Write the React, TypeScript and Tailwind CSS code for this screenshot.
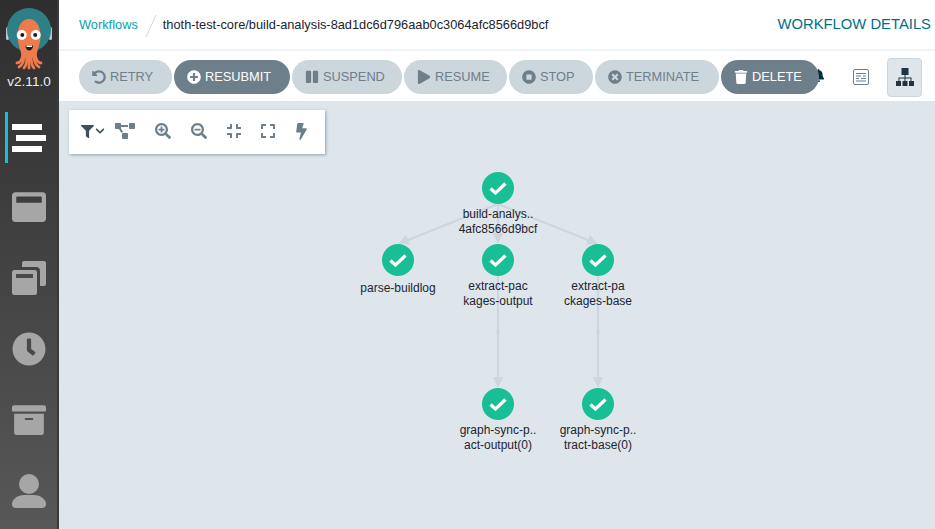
import {
  FaArchive,
  FaBell,
  FaBolt,
  FaChevronDown,
  FaClock,
  FaCompress,
  FaExpand,
  FaFilter,
  FaPause,
  FaPlay,
  FaPlusCircle,
  FaProjectDiagram,
  FaSearchMinus,
  FaSearchPlus,
  FaStopCircle,
  FaTimesCircle,
  FaTrash,
  FaUndoAlt,
  FaWindowMaximize,
} from "react-icons/fa";
import type { IconType } from "react-icons";

const actions: { label: string; icon: IconType; width: string; dark?: boolean }[] = [
  { label: "RETRY", icon: FaUndoAlt, width: "w-[93px]" },
  { label: "RESUBMIT", icon: FaPlusCircle, width: "w-[116px]", dark: true },
  { label: "SUSPEND", icon: FaPause, width: "w-[110px]" },
  { label: "RESUME", icon: FaPlay, width: "w-[103px]" },
  { label: "STOP", icon: FaStopCircle, width: "w-[84px]" },
  { label: "TERMINATE", icon: FaTimesCircle, width: "w-[124px]" },
  { label: "DELETE", icon: FaTrash, width: "w-[98px]", dark: true },
];

// graph coordinates, relative to the canvas
const nodes = [
  { x: 439, y: 87, lines: ["build-analys..", "4afc8566d9bcf"] },
  { x: 339, y: 159, lines: ["parse-buildlog"] },
  { x: 439, y: 159, lines: ["extract-pac", "kages-output"] },
  { x: 539, y: 159, lines: ["extract-pa", "ckages-base"] },
  { x: 439, y: 303, lines: ["graph-sync-p..", "act-output(0)"] },
  { x: 539, y: 303, lines: ["graph-sync-p..", "tract-base(0)"] },
];

function Logo() {
  return (
    <svg width="48" height="64" viewBox="6 6 48 64" className="ml-[1px]">
      <rect x="7" y="27" width="3" height="13" rx="1.5" fill="#b9c7d0" />
      <rect x="50" y="27" width="3" height="13" rx="1.5" fill="#b9c7d0" />
      <circle cx="30" cy="30" r="22" fill="#2f7f86" />
      <path d="M18.5 36 C18.5 26 23 19 30 19 C37 19 41.5 26 41.5 36 C41.5 44 38 50 37 58 H23 C22 50 18.5 44 18.5 36Z" fill="#ef7b4d" />
      <g stroke="#ef7b4d" strokeWidth="2.8" fill="none" strokeLinecap="round">
        <path d="M24 54 C23 60 21 63 18 63" />
        <path d="M25 55 C25 61 24 65 20 67" />
        <path d="M28 55 C28 62 27 66 25 68" />
        <path d="M30 55 V68" />
        <path d="M32 55 C32 62 33 66 35 68" />
        <path d="M35 55 C35 61 36 65 40 67" />
        <path d="M36 54 C37 60 39 63 42 63" />
      </g>
      <circle cx="22.7" cy="35" r="5" fill="#fff" />
      <circle cx="36.7" cy="35" r="5" fill="#fff" />
      <circle cx="23.3" cy="35" r="2" fill="#1d1d1d" />
      <circle cx="36.2" cy="35" r="2" fill="#1d1d1d" />
      <path d="M26.5 45.5 H34 C34 49 32 50.5 30.2 50.5 C28.4 50.5 26.5 49 26.5 45.5Z" fill="#1d1d1d" />
      <path d="M27.5 45.5 H33 V47 H27.5Z" fill="#fff" />
    </svg>
  );
}

function StackedWindows() {
  return (
    <svg width="34" height="34" viewBox="0 0 34 34">
      <path d="M10 2 Q10 0 12 0 H32 Q34 0 34 2 V23 Q34 25 32 25 H28 V10 Q28 6 24 6 H10Z" fill="#a6a6a6" />
      <rect x="0" y="9" width="25" height="25" rx="2.5" fill="#a6a6a6" />
      <rect x="4" y="13" width="17" height="4" fill="#4a4a4a" />
    </svg>
  );
}

function UserIcon() {
  return (
    <svg width="34" height="34" viewBox="0 0 34 34" fill="#a6a6a6">
      <circle cx="17" cy="10" r="10" />
      <path d="M0 30 C0 25 6 21 12 21 H22 C28 21 34 25 34 30 Q34 34 30 34 H4 Q0 34 0 30Z" />
    </svg>
  );
}

function BarsIcon() {
  return (
    <div className="flex flex-col gap-[5px]">
      <div className="w-[30px] h-[6px] bg-white" />
      <div className="w-[30px] h-[6px] bg-white ml-1" />
      <div className="w-[30px] h-[6px] bg-white" />
    </div>
  );
}

function Sidebar() {
  return (
    <div className="w-[59px] h-full shrink-0 flex flex-col items-center bg-gradient-to-b from-[#2e2e2e] to-[#585858] border-r-2 border-[#3a3a3a] text-[#a6a6a6]">
      <div className="h-[112px] flex flex-col items-center pt-[6px] w-full">
        <Logo />
        <div className="mt-[4px] ml-[1px] text-[13.6px] leading-4 text-[#e8edf0]">v2.11.0</div>
      </div>
      <div className="relative w-full h-[51px] flex items-center pl-3">
        <div className="absolute left-[5px] top-0 w-[3px] h-[51px] bg-[#18bed4]" />
        <BarsIcon />
      </div>
      <div className="mt-[27px] ml-[1px] flex flex-col items-center gap-[37px]">
        <FaWindowMaximize size={34} />
        <StackedWindows />
        <FaClock size={34} />
        <FaArchive size={34} />
        <UserIcon />
      </div>
    </div>
  );
}

function LogIcon() {
  return (
    <svg width="16" height="16" viewBox="0 0 16 16" fill="none" stroke="#6d7f8b">
      <rect x="0.5" y="0.5" width="15" height="15" rx="1.5" />
      <path d="M3 4.5H13M3 7H8M10 7H13M3 9.5H6M8 9.5H13M3 12H13" />
    </svg>
  );
}

function SitemapIcon() {
  return (
    <svg width="18" height="18" viewBox="0 0 18 18" fill="#1f3442">
      <rect x="5.5" y="0" width="7" height="7" />
      <rect x="0" y="13" width="5" height="5" />
      <rect x="6.5" y="13" width="5" height="5" />
      <rect x="13" y="13" width="5" height="5" />
      <path d="M8.5 7 H9.5 V9.5 H15.5 V13 H14.5 V10.5 H9.5 V13 H8.5 V10.5 H3.5 V13 H2.5 V9.5 H8.5Z" />
    </svg>
  );
}

function ActionBar() {
  return (
    <div className="h-[50px] shrink-0 flex items-center bg-white pl-5 pr-[13px]">
      <div className="relative z-10 flex gap-[2px] mt-[2px]">
        {actions.map((a) => (
          <button
            key={a.label}
            className={`${a.width} h-[34px] rounded-[17px] flex items-center justify-start pl-[13px] gap-[4px] text-[12.8px] ${
              a.dark ? "bg-[#6d7f8b] text-white" : "bg-[#ccd6dd] text-[#6d7f8b]"
            }`}
          >
            <a.icon size={14} />
            {a.label}
          </button>
        ))}
      </div>
      <FaBell size={13} className="ml-[-7px] mt-[-2px] text-[#00303f]" />
      <div className="ml-[28px] mt-[2px]">
        <LogIcon />
      </div>
      <button className="ml-[18px] mt-[2px] w-[35px] h-[39px] flex items-center justify-center rounded bg-[#dee6eb] border border-[#ccd6dd]">
        <SitemapIcon />
      </button>
    </div>
  );
}

function GraphToolbar() {
  const c = "text-[#6d7f8b]";
  return (
    <div className="absolute left-[10px] top-[9px] w-[256px] h-[44px] bg-white shadow-[1px_1px_3px_#8fa4b1] flex items-center pb-[2px]">
      <FaFilter size={13} className="ml-[12px] text-[#3f4f5b]" />
      <FaChevronDown size={10} className="ml-[1px] text-[#3f4f5b]" />
      <FaProjectDiagram size={20} className="ml-[10px] text-[#6d7f8b]" />
      <FaSearchPlus size={16} className={`ml-[20px] ${c}`} />
      <FaSearchMinus size={16} className={`ml-[20px] ${c}`} />
      <FaCompress size={16} className={`ml-[19px] ${c}`} />
      <FaExpand size={16} className={`ml-[18px] ${c}`} />
      <FaBolt size={17} className={`ml-[17px] ${c}`} />
    </div>
  );
}

function Edges() {
  const stroke = "#ccd6dd";
  return (
    <svg width="876" height="428" className="absolute left-0 top-0">
      <g stroke={stroke} strokeWidth="2" fill="none">
        <path d="M439 103 L349 139" />
        <path d="M439 103 L439 134" />
        <path d="M439 103 L529 139" />
        <path d="M439 175 V280" />
        <path d="M539 175 V280" />
      </g>
      <g fill={stroke}>
        <polygon points="339,143 351,143.5 347,134" />
        <polygon points="439,143 434,132 444,132" />
        <polygon points="539,143 527,143.5 531,134" />
        <polygon points="439,287 434,276 444,276" />
        <polygon points="539,287 534,276 544,276" />
        <circle cx="439" cy="231" r="2" />
        <circle cx="539" cy="231" r="2" />
      </g>
    </svg>
  );
}

function Node({ x, y, lines }: { x: number; y: number; lines: string[] }) {
  return (
    <div className="absolute w-[100px] flex flex-col items-center" style={{ left: x - 50, top: y - 16 }}>
      <div className="w-[32px] h-[32px] rounded-full bg-[#18be94] flex items-center justify-center">
        <svg width="18" height="13" viewBox="0 0 18 13" fill="none" stroke="#fff" strokeWidth="3.2">
          <path d="M1.5 6.5 L6.5 11 L16.5 1.5" />
        </svg>
      </div>
      <div className={`text-[12px] leading-[14.5px] text-[#1c2431] text-center whitespace-nowrap ${lines.length === 1 ? "mt-[5px]" : "mt-[3px]"}`}>
        {lines.map((l) => (
          <div key={l}>{l}</div>
        ))}
      </div>
    </div>
  );
}

export default function App() {
  return (
    <div className="w-[935px] h-[529px] flex overflow-hidden bg-[#dee6eb] font-['Liberation_Sans',Arial,sans-serif]">
      <Sidebar />
      <div className="flex-1 min-w-0 flex flex-col">
        <div className="h-[51px] shrink-0 flex items-center bg-white border-b-2 border-[#f1f4f6] pl-5 pr-1">
          <span className="text-[12.8px] text-[#00a2b3]">Workflows</span>
          <svg width="12" height="24" viewBox="0 0 12 24" className="ml-[7px] mr-[6px] mt-[2px]">
            <path d="M11 1 L1 23" stroke="#ccd6dd" fill="none" />
          </svg>
          <span className="text-[12.8px] text-[#1c2431]">thoth-test-core/build-analysis-8ad1dc6d796aab0c3064afc8566d9bcf</span>
          <span className="ml-auto text-[14.8px] text-[#00708a]">WORKFLOW DETAILS</span>
        </div>
        <ActionBar />
        <div className="relative flex-1">
          <Edges />
          <GraphToolbar />
          {nodes.map((n) => (
            <Node key={`${n.x}-${n.y}`} {...n} />
          ))}
        </div>
      </div>
    </div>
  );
}
